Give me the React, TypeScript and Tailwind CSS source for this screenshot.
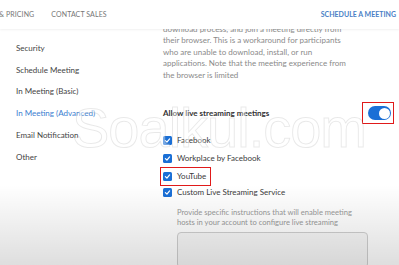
import React from "react";

const Check = () => (
  <span className="flex h-[9px] w-[9px] shrink-0 items-center justify-center rounded-[1.5px] bg-[#1a6fd6]">
    <svg width="7" height="7" viewBox="0 0 10 10">
      <path d="M2 5.2 L4.2 7.3 L8 2.8" fill="none" stroke="white" strokeWidth="1.8" strokeLinecap="round" strokeLinejoin="round" />
    </svg>
  </span>
);

const Row = ({ label, boxed }: { label: string; boxed?: boolean }) => (
  <div className="relative flex h-[18px] items-center gap-[5px]">
    <Check />
    <span className="text-[8px] text-[#3a3a3a]">{label}</span>
    {boxed && (
      <span className="pointer-events-none absolute left-[-3px] top-[0px] h-[19px] w-[51px] border-[1.5px] border-[#e01a1a]" />
    )}
  </div>
);

export default function App() {
  const nav = ["Security", "Schedule Meeting", "In Meeting (Basic)", "In Meeting (Advanced)", "Email Notification", "Other"];
  return (
    <div className="relative h-[265px] w-[399px] overflow-hidden bg-white" style={{ fontFamily: "Lato, 'Open Sans', sans-serif" }}>
      <div className="relative z-10 flex h-[29px] items-center justify-between bg-white pr-[3px] shadow-[0_1px_2px_rgba(0,0,0,0.06)]">
        <div className="flex items-center gap-[17px] text-[7px] tracking-[0.1px] text-[#777]">
          <span className="-ml-[1px]">&amp; PRICING</span>
          <span>CONTACT SALES</span>
        </div>
        <span className="text-[7px] font-bold text-[#4a7fc6]">SCHEDULE A MEETING</span>
      </div>
      <div className="flex">
        <div className="flex w-[163px] shrink-0 flex-col pl-[16px] pt-[8px]">
          {nav.map((n) => (
            <div key={n} className={`flex h-[21.8px] items-center text-[8px] ${n === "In Meeting (Advanced)" ? "text-[#3b7ed0]" : "text-[#444]"}`}>
              {n}
            </div>
          ))}
        </div>
        <div className="flex flex-1 flex-col">
          <div className="-mt-[5px] text-[8px] leading-[11.4px] text-[#8a8a8a]">
            <div>download process, and join a meeting directly from</div>
            <div>their browser. This is a workaround for participants</div>
            <div>who are unable to download, install, or run</div>
            <div>applications. Note that the meeting experience from</div>
            <div>the browser is limited</div>
          </div>
          <div className="mt-[25px] flex items-center justify-between pr-[8px]">
            <span className="text-[8px] font-bold text-[#333]">Allow live streaming meetings</span>
            <div className="relative flex h-[14px] w-[23px] items-center justify-end rounded-full bg-[#1a6fd6] pr-[1.5px]">
              <span className="h-[11px] w-[11px] rounded-full bg-white" />
              <span className="pointer-events-none absolute left-[-6px] top-[-4px] h-[22px] w-[32px] border-[1.5px] border-[#e01a1a]" />
            </div>
          </div>
          <div className="mt-[11px] flex flex-col">
            <Row label="Facebook" />
            <Row label="Workplace by Facebook" />
            <Row label="YouTube" boxed />
            <div className="-mt-[2px]">
              <Row label="Custom Live Streaming Service" />
            </div>
          </div>
          <div className="mt-[6px] pl-[14px] text-[7.6px] leading-[10px] text-[#9a9a9a]">
            <div>Provide specific instructions that will enable meeting</div>
            <div>hosts in your account to configure live streaming</div>
          </div>
          <div className="ml-[14px] mt-[5px] h-[36px] w-[191px] rounded-[4px] border border-[#cfcfcf] bg-[#f7f7f7]" />
        </div>
      </div>
      <div
        className="pointer-events-none absolute left-[72px] top-[100px] z-20 text-[56px] leading-none tracking-[-1px] text-[rgba(255,255,255,0.4)] [-webkit-text-stroke:1px_rgba(0,0,0,0.09)]"
        style={{ fontFamily: "'Liberation Sans', sans-serif" }}
      >
        Soalkul.com
      </div>
      <div className="pointer-events-none absolute bottom-0 left-0 right-0 z-20 h-[80px] bg-gradient-to-b from-[rgba(0,0,0,0)] to-[rgba(0,0,0,0.13)]" />
    </div>
  );
}
